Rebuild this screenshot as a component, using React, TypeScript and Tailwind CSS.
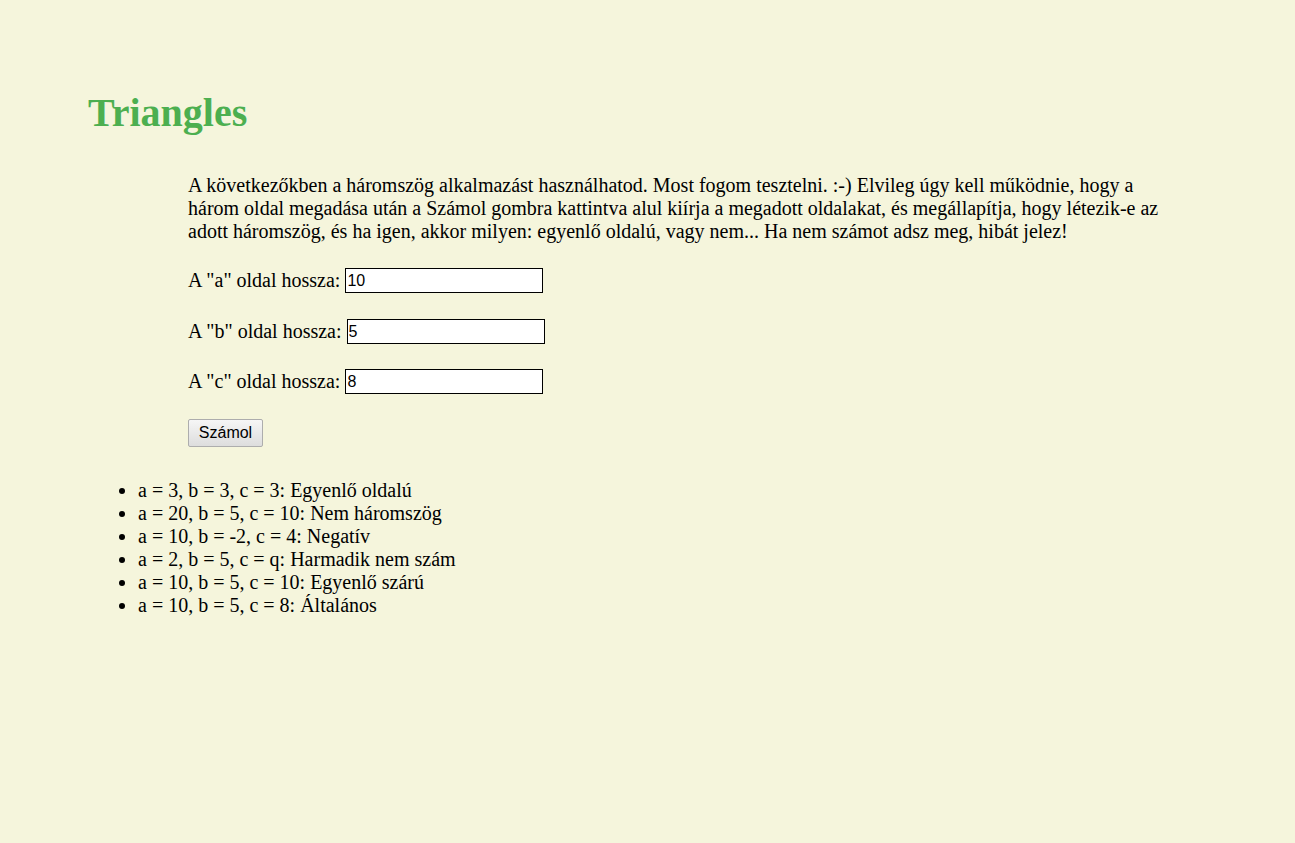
import React from "react";

export default function App() {
  const items = [
    "a = 3, b = 3, c = 3: Egyenlő oldalú",
    "a = 20, b = 5, c = 10: Nem háromszög",
    "a = 10, b = -2, c = 4: Negatív",
    "a = 2, b = 5, c = q: Harmadik nem szám",
    "a = 10, b = 5, c = 10: Egyenlő szárú",
    "a = 10, b = 5, c = 8: Általános",
  ];
  const rows = [
    { label: 'A "a" oldal hossza:', value: "10", mt: "mt-[25px]" },
    { label: 'A "b" oldal hossza:', value: "5", mt: "mt-[26px]" },
    { label: 'A "c" oldal hossza:', value: "8", mt: "mt-[25px]" },
  ];
  return (
    <div className="min-h-[843px] bg-[#f5f5dc] font-['Liberation_Serif','Times_New_Roman',serif] text-[20px] leading-[23px] text-black">
      <div className="pl-[88px] pt-[90px]">
        <h1 className="m-0 text-[40px] font-bold leading-[46px] text-[#4caf50]">Triangles</h1>
        <div className="ml-[100px] mt-[38px]">
          <p className="m-0 max-w-[992px]">
            A következőkben a háromszög alkalmazást használhatod. Most fogom tesztelni. :-) Elvileg úgy kell működnie, hogy a három oldal megadása után a Számol gombra kattintva alul kiírja a megadott oldalakat, és megállapítja, hogy létezik-e az adott háromszög, és ha igen, akkor milyen: egyenlő oldalú, vagy nem... Ha nem számot adsz meg, hibát jelez!
          </p>
          {rows.map((r) => (
            <div key={r.label} className={`${r.mt} flex h-[25px] items-center`}>
              <span className="whitespace-pre">{r.label} </span>
              <input
                readOnly
                value={r.value}
                className="h-[25px] w-[198px] border border-black bg-white px-[1px] font-['Liberation_Sans',Arial,sans-serif] text-[16px] text-black outline-none"
              />
            </div>
          ))}
          <div className="mt-[25px] flex">
            <button className="h-[28px] w-[75px] rounded-[2px] border border-[#adadad] bg-gradient-to-b from-[#f6f6f6] to-[#dddddd] font-['Liberation_Sans',Arial,sans-serif] text-[16px] leading-none text-black">
              Számol
            </button>
          </div>
        </div>
        <ul className="mt-[32px] list-disc pl-[50px]">
          {items.map((t) => (
            <li key={t}>{t}</li>
          ))}
        </ul>
      </div>
    </div>
  );
}
